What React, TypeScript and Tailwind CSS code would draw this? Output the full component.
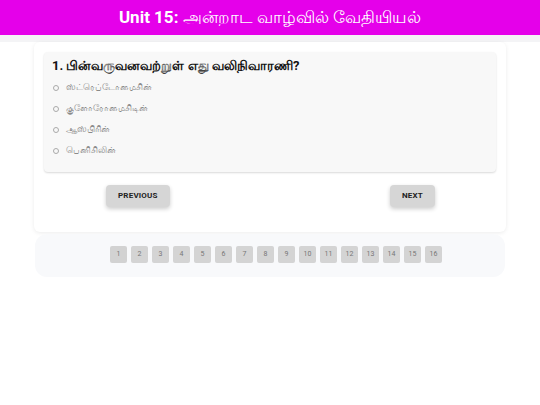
import React, { useState } from 'react';

const options = ['ஸ்ட்ரெப்டோமைசின்', 'குளோரோமைசிடின்', 'ஆஸ்பிரின்', 'பெனிசிலின்'];

export default function App() {
  const [selected, setSelected] = useState<number | null>(null);
  const [page, setPage] = useState(1);

  return (
    <div className="min-h-[405px] w-full bg-white" style={{ fontFamily: 'Roboto, "Noto Sans", sans-serif' }}>
      {/* Header */}
      <header className="flex h-[35px] items-center justify-center bg-[#e500ea] text-white">
        <h1 className="text-[17px] leading-none">
          <span className="font-bold">Unit 15:</span> அன்றாட வாழ்வில் வேதியியல்
        </h1>
      </header>
      <div className="h-[7px] bg-[#f4f4f6]" />

      <main className="flex flex-col items-center px-[34px]">
        {/* Question card */}
        <section className="w-full rounded-md bg-white px-[10px] pt-[10px] pb-[25px] shadow-[0_1px_4px_rgba(0,0,0,0.08)]">
          <div className="rounded-sm bg-[#f8f8f8] px-[8px] pt-[6px] pb-[11px] shadow-[0_1px_2px_rgba(0,0,0,0.15)]">
            <h2 className="text-[13px] font-bold leading-[16px] text-[#111]">1. பின்வருவனவற்றுள் எது வலிநிவாரணி?</h2>
            <ul className="mt-[3px] flex flex-col">
              {options.map((o, i) => (
                <li
                  key={o}
                  onClick={() => setSelected(i)}
                  className="flex h-[21px] cursor-pointer items-center gap-[7px] pl-[1px] text-[9px] text-[#8a8a8a]"
                >
                  <span className="flex h-[6px] w-[6px] items-center justify-center rounded-full border border-[#aaa]">
                    {selected === i && <span className="h-[2px] w-[2px] rounded-full bg-[#666]" />}
                  </span>
                  {o}
                </li>
              ))}
            </ul>
          </div>

          <div className="mt-[13px] flex justify-between pl-[62px] pr-[61px]">
            <button className="h-[22px] rounded-sm bg-[#d6d6d6] px-[12px] text-[8px] font-bold tracking-wide text-[#222] shadow-[0_2px_4px_rgba(0,0,0,0.2)]">
              PREVIOUS
            </button>
            <button className="h-[22px] rounded-sm bg-[#d6d6d6] px-[12px] text-[8px] font-bold tracking-wide text-[#222] shadow-[0_2px_4px_rgba(0,0,0,0.2)]">
              NEXT
            </button>
          </div>
        </section>

        {/* Pagination */}
        <nav className="mt-[2px] flex h-[43px] w-[470px] items-center justify-center gap-[4px] rounded-xl bg-[#f8f9fb] pl-[12px] pb-[3px]">
          {Array.from({ length: 16 }, (_, i) => i + 1).map((n) => (
            <button
              key={n}
              onClick={() => setPage(n)}
              className={`flex h-[17px] w-[17px] items-center justify-center rounded-[2px] text-[7px] ${
                page === n ? 'bg-[#d2d2d2] text-[#777]' : 'bg-[#d4d4d4] text-[#777]'
              }`}
            >
              {n}
            </button>
          ))}
        </nav>
      </main>
    </div>
  );
}
